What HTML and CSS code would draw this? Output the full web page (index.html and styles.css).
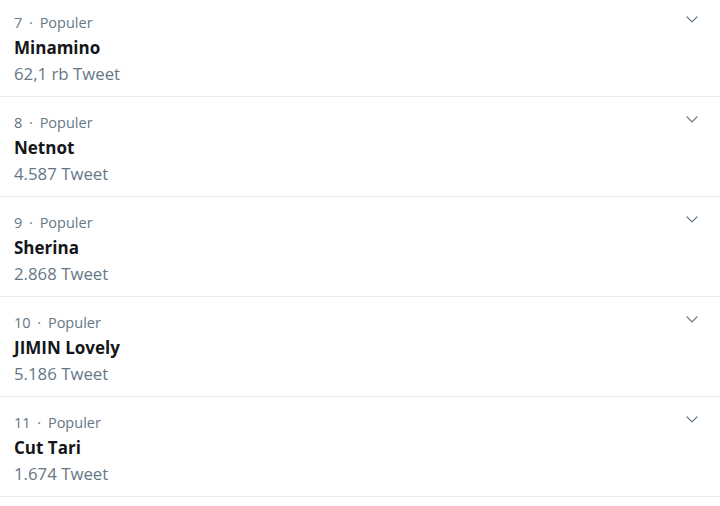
FILE: index.html
```html
<!DOCTYPE html>
<html lang="id">
<head>
<meta charset="utf-8">
<link rel="stylesheet" href="styles.css">
</head>
<body>
<ul class="trends">
  <li class="trend">
    <div class="info">
      <div class="meta">7 · Populer</div>
      <div class="name">Minamino</div>
      <div class="count">62,1 rb Tweet</div>
    </div>
    <svg class="chev" viewBox="0 0 24 24"><path d="M20.207 8.147a1 1 0 0 0-1.414 0L12 14.94 5.207 8.147a1 1 0 0 0-1.414 1.414l7.5 7.5a1 1 0 0 0 1.414 0l7.5-7.5a1 1 0 0 0 0-1.414z"/></svg>
  </li>
  <li class="trend">
    <div class="info">
      <div class="meta">8 · Populer</div>
      <div class="name">Netnot</div>
      <div class="count">4.587 Tweet</div>
    </div>
    <svg class="chev" viewBox="0 0 24 24"><path d="M20.207 8.147a1 1 0 0 0-1.414 0L12 14.94 5.207 8.147a1 1 0 0 0-1.414 1.414l7.5 7.5a1 1 0 0 0 1.414 0l7.5-7.5a1 1 0 0 0 0-1.414z"/></svg>
  </li>
  <li class="trend">
    <div class="info">
      <div class="meta">9 · Populer</div>
      <div class="name">Sherina</div>
      <div class="count">2.868 Tweet</div>
    </div>
    <svg class="chev" viewBox="0 0 24 24"><path d="M20.207 8.147a1 1 0 0 0-1.414 0L12 14.94 5.207 8.147a1 1 0 0 0-1.414 1.414l7.5 7.5a1 1 0 0 0 1.414 0l7.5-7.5a1 1 0 0 0 0-1.414z"/></svg>
  </li>
  <li class="trend">
    <div class="info">
      <div class="meta">10 · Populer</div>
      <div class="name">JIMIN Lovely</div>
      <div class="count">5.186 Tweet</div>
    </div>
    <svg class="chev" viewBox="0 0 24 24"><path d="M20.207 8.147a1 1 0 0 0-1.414 0L12 14.94 5.207 8.147a1 1 0 0 0-1.414 1.414l7.5 7.5a1 1 0 0 0 1.414 0l7.5-7.5a1 1 0 0 0 0-1.414z"/></svg>
  </li>
  <li class="trend">
    <div class="info">
      <div class="meta">11 · Populer</div>
      <div class="name">Cut Tari</div>
      <div class="count">1.674 Tweet</div>
    </div>
    <svg class="chev" viewBox="0 0 24 24"><path d="M20.207 8.147a1 1 0 0 0-1.414 0L12 14.94 5.207 8.147a1 1 0 0 0-1.414 1.414l7.5 7.5a1 1 0 0 0 1.414 0l7.5-7.5a1 1 0 0 0 0-1.414z"/></svg>
  </li>
</ul>
</body>
</html>
```
FILE: styles.css
```css
html, body {
  margin: 0;
  padding: 0;
  background: #ffffff;
}
body {
  font-family: "Open Sans", "Noto Sans", sans-serif;
  color: #14171a;
  overflow: hidden;
}
.trends {
  list-style: none;
  margin: -3px 0 0 0;
  padding: 0;
}
.trend {
  display: flex;
  justify-content: space-between;
  align-items: flex-start;
  height: 99px;
  border-bottom: 1px solid #e6ecf0;
  padding: 0 20px 0 14px;
}
.info {
  display: flex;
  flex-direction: column;
  padding-top: 14px;
}
.meta {
  font-size: 14.5px;
  line-height: 24px;
  color: #657786;
  word-spacing: 3px;
}
.name {
  font-size: 17px;
  font-weight: 700;
  line-height: 26px;
}
.count {
  font-size: 16.8px;
  line-height: 25px;
  color: #657786;
}
.chev {
  width: 16px;
  height: 16px;
  fill: #657786;
  margin-top: 14px;
}
```
